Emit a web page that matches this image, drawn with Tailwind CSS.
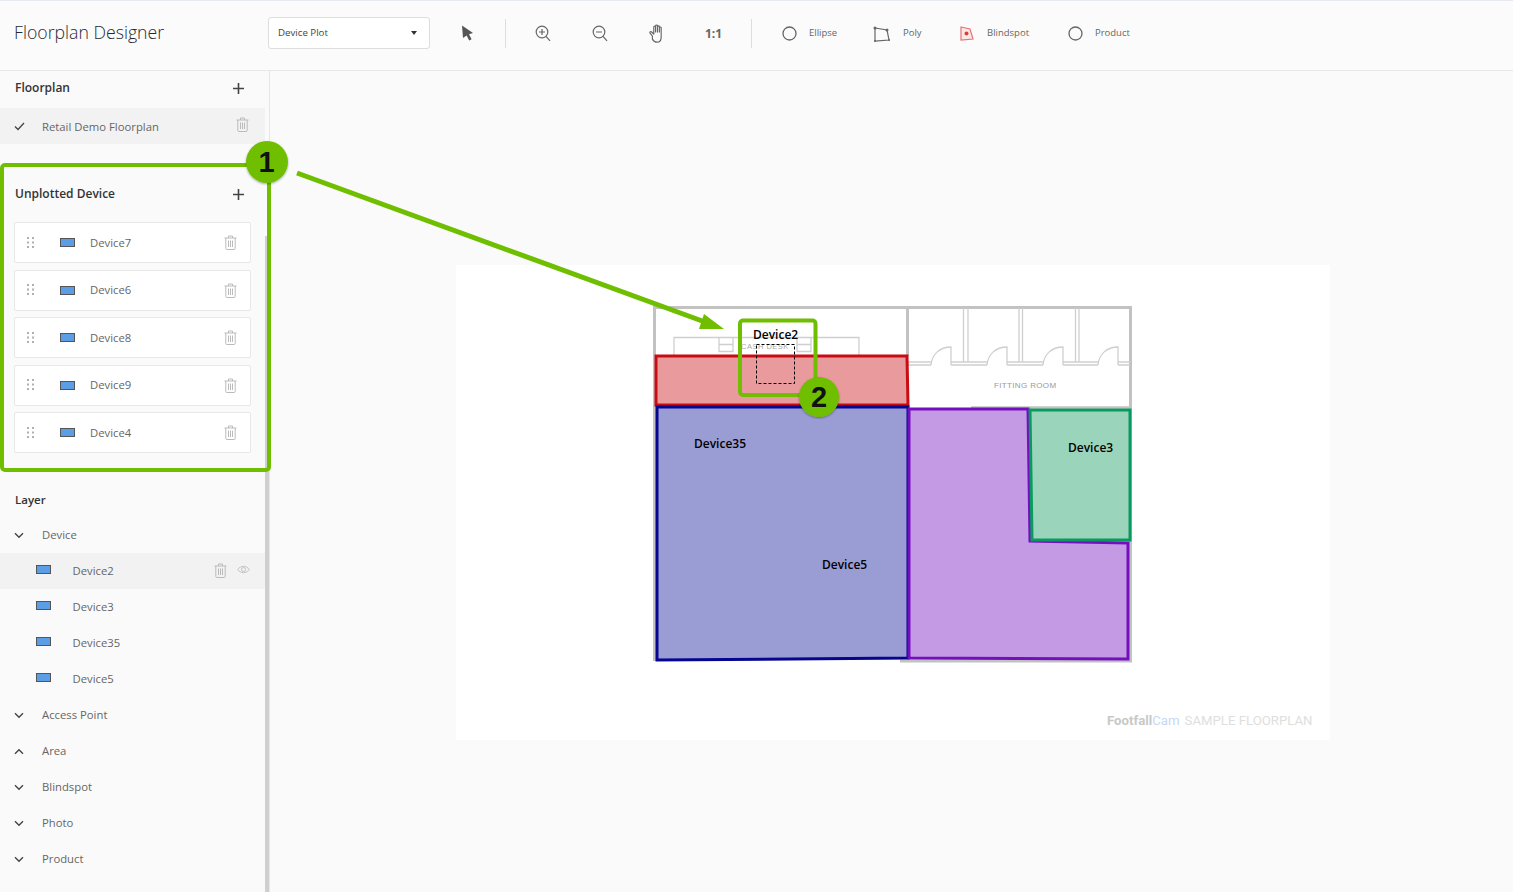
<!DOCTYPE html>
<html>
<head>
<meta charset="utf-8">
<script src="https://cdn.jsdelivr.net/npm/@tailwindcss/browser@4"></script>
</head>
<body class="m-0 overflow-hidden bg-[#fafafa] font-['Open_Sans',sans-serif] text-[#333]">
<svg width="0" height="0" class="absolute">
  <defs>
    <symbol id="trash" viewBox="0 0 13 15"><path d="M.5 3h12M4.500 3V1h4V3M1.800 3v10.500c0 .5.4 1 1 1h7.400c.6 0 1-.5 1-1V3M4.500 5.500v6.500M6.500 5.500v6.500M8.500 5.500v6.500" fill="none" stroke="currentColor" stroke-width="1"/></symbol>
    <symbol id="down" viewBox="0 0 10 7"><path d="M1 1.200l4 4 4-4" fill="none" stroke="#444" stroke-width="1.400"/></symbol>
    <symbol id="up" viewBox="0 0 10 7"><path d="M1 5.800l4-4 4 4" fill="none" stroke="#444" stroke-width="1.400"/></symbol>
    <symbol id="plus" viewBox="0 0 11 11"><path d="M5.500 0v11M0 5.500h11" stroke="#444" stroke-width="1.600"/></symbol>
    <symbol id="grip" viewBox="0 0 7 11"><g fill="#b0b0b0"><rect x="0" y="0" width="2" height="2"/><rect x="5" y="0" width="2" height="2"/><rect x="0" y="4.500" width="2" height="2"/><rect x="5" y="4.500" width="2" height="2"/><rect x="0" y="9" width="2" height="2"/><rect x="5" y="9" width="2" height="2"/></g></symbol>
  </defs>
</svg>

<div class="relative w-[1513px] h-[892px] overflow-hidden flex flex-col">
  <!-- Header -->
  <header class="h-[71px] shrink-0 flex items-center pb-[4px] border-t border-t-[#e6eaf0] border-b border-b-[#e8e8e8] bg-[#fbfbfb]">
    <h1 class="w-[268px] mb-[2px] pl-[14px] text-[17.700px] font-light text-[#1f2a35] whitespace-nowrap">Floorplan Designer</h1>
    <div class="w-[162px] h-[32px] mb-[2px] flex items-center justify-between pl-[9px] pr-[12px] bg-white border border-[#ddd] rounded-[3px] text-[9.700px] text-[#444]">
      <span class="pt-[1px]">Device Plot</span>
      <span class="w-0 h-0 border-x-[3.500px] border-x-transparent border-t-[4px] border-t-[#333]"></span>
    </div>
    <svg class="ml-[31px] mb-[1px] w-[13px] h-[16px]" viewBox="0 0 13 16"><path d="M1 .5l11 7.500-4 1.200 2.600 5-2.400 1.300-2.600-5L2 13z" fill="#555"/></svg>
    <span class="ml-[31px] w-px h-[29px] bg-[#ddd]"></span>
    <svg class="ml-[29px] w-[16px] h-[17px]" viewBox="0 0 16 17" fill="none" stroke="#666" stroke-width="1.200"><circle cx="7" cy="7" r="5.800"/><path d="M11 11.300l4 4.600M7 4v6M4 7h6"/></svg>
    <svg class="ml-[41px] w-[16px] h-[17px]" viewBox="0 0 16 17" fill="none" stroke="#666" stroke-width="1.200"><circle cx="7" cy="7" r="5.800"/><path d="M11 11.300l4 4.600M4 7h6"/></svg>
    <svg class="ml-[41px] w-[18px] h-[19px]" viewBox="0 0 17 18" fill="none" stroke="#666" stroke-width="1.100"><path d="M3.200 11.500L1 8.600c-.6-1 .7-1.800 1.500-1L4.500 9.600V2.800c0-1.200 1.700-1.200 1.700 0V1.800c0-1.100 1.800-1.100 1.800 0v.8c0-1.100 1.800-1.100 1.800 0v1c0-1.100 1.700-1 1.700 0v8.600c0 3-1.400 5-4 5-2.300 0-3.300-1.200-4.300-2.900zM6.200 2.800V8M8 2.600V8M9.800 3.600V8" stroke-linejoin="round"/></svg>
    <span class="ml-[38px] w-[18px] text-[12px] font-bold text-[#666]">1:1</span>
    <span class="ml-[28px] w-px h-[29px] bg-[#ddd]"></span>
    <svg class="ml-[30px] mb-[1px] w-[15px] h-[15px]" viewBox="0 0 15 15"><circle cx="7.500" cy="7.500" r="6.500" fill="none" stroke="#666" stroke-width="1.300"/></svg>
    <span class="ml-[12px] w-[29px] text-[9.500px] text-[#666]">Ellipse</span>
    <svg class="ml-[35px] w-[17px] h-[16px]" viewBox="0 0 17 16" fill="none" stroke="#666" stroke-width="1.200"><path d="M2 2l12 2 2 10-14 1z"/><g fill="#666" stroke="none"><circle cx="2" cy="2" r="1.500"/><circle cx="14" cy="4" r="1.500"/><circle cx="16" cy="14" r="1"/><circle cx="2" cy="15" r="1"/></g></svg>
    <span class="ml-[13px] w-[19px] text-[9.500px] text-[#666]">Poly</span>
    <svg class="ml-[38px] w-[14px] h-[15px]" viewBox="0 0 14 15"><path d="M1 1l9 2 3 10-12 1z" fill="#fde8e8" stroke="#e57373" stroke-width="1.200"/><circle cx="6.500" cy="7.500" r="2" fill="#e53935"/></svg>
    <span class="ml-[13px] w-[43px] text-[9.500px] text-[#666]">Blindspot</span>
    <svg class="ml-[38px] mb-[1px] w-[15px] h-[15px]" viewBox="0 0 15 15"><circle cx="7.500" cy="7.500" r="6.500" fill="none" stroke="#666" stroke-width="1.300"/></svg>
    <span class="ml-[12px] text-[9.500px] text-[#666]">Product</span>
  </header>

  <div class="flex flex-1 min-h-0">
    <!-- Sidebar -->
    <aside class="relative w-[270px] shrink-0 border-r border-[#e6e6e6] pr-[4px] text-[11.300px]">
      <div class="absolute right-0 top-[165px] bottom-0 w-[4px] bg-[#cfcfcf]"></div>
      <div class="h-[37px] flex items-center justify-between pb-[3px] pl-[15px] pr-[21px] font-semibold text-[12px] text-[#333]">
        <span>Floorplan</span>
        <svg class="w-[11px] h-[11px]"><use href="#plus"/></svg>
      </div>
      <div class="h-[36px] flex items-center bg-[#f2f2f2] pl-[14px] pr-[16px] text-[#666]">
        <svg class="w-[11px] h-[9px]" viewBox="0 0 11 9"><path d="M1 4.500l3 3 6-6.500" fill="none" stroke="#444" stroke-width="1.300"/></svg>
        <span class="ml-[17px] flex-1 pt-[2px]">Retail Demo Floorplan</span>
        <svg class="w-[13px] h-[15px] -mt-[4px] text-[#bbb]"><use href="#trash"/></svg>
      </div>

      <div class="mt-[32px] h-[36px] flex items-center justify-between pl-[15px] pr-[21px] font-semibold text-[12px] text-[#333]">
        <span>Unplotted Device</span>
        <svg class="w-[11px] h-[11px]"><use href="#plus"/></svg>
      </div>
      <ul class="mt-[10px] ml-[14px] w-[237px] flex flex-col gap-[6.500px] text-[#666]">
        <li class="h-[41px] flex items-center bg-white border border-[#e8e8e8] rounded-[2px] pl-[12px] pr-[13px]"><svg class="w-[7px] h-[11px] -mt-[1px]"><use href="#grip"/></svg><span class="ml-[26px] w-[15px] h-[9px] bg-[#5c9ee6] border border-[#555]"></span><span class="ml-[15px] flex-1 pt-[1px]">Device7</span><svg class="w-[13px] h-[15px] text-[#bbb]"><use href="#trash"/></svg></li>
        <li class="h-[41px] flex items-center bg-white border border-[#e8e8e8] rounded-[2px] pl-[12px] pr-[13px]"><svg class="w-[7px] h-[11px] -mt-[1px]"><use href="#grip"/></svg><span class="ml-[26px] w-[15px] h-[9px] bg-[#5c9ee6] border border-[#555]"></span><span class="ml-[15px] flex-1 pt-[1px]">Device6</span><svg class="w-[13px] h-[15px] text-[#bbb]"><use href="#trash"/></svg></li>
        <li class="h-[41px] flex items-center bg-white border border-[#e8e8e8] rounded-[2px] pl-[12px] pr-[13px]"><svg class="w-[7px] h-[11px] -mt-[1px]"><use href="#grip"/></svg><span class="ml-[26px] w-[15px] h-[9px] bg-[#5c9ee6] border border-[#555]"></span><span class="ml-[15px] flex-1 pt-[1px]">Device8</span><svg class="w-[13px] h-[15px] text-[#bbb]"><use href="#trash"/></svg></li>
        <li class="h-[41px] flex items-center bg-white border border-[#e8e8e8] rounded-[2px] pl-[12px] pr-[13px]"><svg class="w-[7px] h-[11px] -mt-[1px]"><use href="#grip"/></svg><span class="ml-[26px] w-[15px] h-[9px] bg-[#5c9ee6] border border-[#555]"></span><span class="ml-[15px] flex-1 pt-[1px]">Device9</span><svg class="w-[13px] h-[15px] text-[#bbb]"><use href="#trash"/></svg></li>
        <li class="h-[41px] flex items-center bg-white border border-[#e8e8e8] rounded-[2px] pl-[12px] pr-[13px]"><svg class="w-[7px] h-[11px] -mt-[1px]"><use href="#grip"/></svg><span class="ml-[26px] w-[15px] h-[9px] bg-[#5c9ee6] border border-[#555]"></span><span class="ml-[15px] flex-1 pt-[1px]">Device4</span><svg class="w-[13px] h-[15px] text-[#bbb]"><use href="#trash"/></svg></li>
      </ul>

      <div class="mt-[28px] h-[36px] flex items-center pt-[2px] pl-[15px] font-semibold text-[11.500px] text-[#333]">Layer</div>
      <div class="flex flex-col text-[#666]">
        <div class="h-[36px] flex items-center pl-[14px]"><svg class="w-[10px] h-[7px]"><use href="#down"/></svg><span class="ml-[18px]">Device</span></div>
        <div class="h-[36px] flex items-center bg-[#f2f2f2] pl-[36px] pr-[15px]"><span class="w-[15px] h-[9px] -mt-[3px] bg-[#5c9ee6] border border-[#555]"></span><span class="ml-[21.500px] flex-1 font-medium">Device2</span><svg class="w-[13px] h-[15px] -mt-[2px] text-[#bbb]"><use href="#trash"/></svg><svg class="ml-[10px] -mt-[4px] w-[13px] h-[9px]" viewBox="0 0 13 9" fill="none" stroke="#c4c4c4"><path d="M.7 4.500C3.500.3 9.500.3 12.300 4.500 9.500 8.700 3.500 8.700.7 4.500z"/><circle cx="6.500" cy="4.500" r="2"/></svg></div>
        <div class="h-[36px] flex items-center pl-[36px]"><span class="w-[15px] h-[9px] -mt-[3px] bg-[#5c9ee6] border border-[#555]"></span><span class="ml-[21.500px]">Device3</span></div>
        <div class="h-[36px] flex items-center pl-[36px]"><span class="w-[15px] h-[9px] -mt-[3px] bg-[#5c9ee6] border border-[#555]"></span><span class="ml-[21.500px]">Device35</span></div>
        <div class="h-[36px] flex items-center pl-[36px]"><span class="w-[15px] h-[9px] -mt-[3px] bg-[#5c9ee6] border border-[#555]"></span><span class="ml-[21.500px]">Device5</span></div>
        <div class="h-[36px] flex items-center pl-[14px]"><svg class="w-[10px] h-[7px]"><use href="#down"/></svg><span class="ml-[18px]">Access Point</span></div>
        <div class="h-[36px] flex items-center pl-[14px]"><svg class="w-[10px] h-[7px]"><use href="#up"/></svg><span class="ml-[18px]">Area</span></div>
        <div class="h-[36px] flex items-center pl-[14px]"><svg class="w-[10px] h-[7px]"><use href="#down"/></svg><span class="ml-[18px]">Blindspot</span></div>
        <div class="h-[36px] flex items-center pl-[14px]"><svg class="w-[10px] h-[7px]"><use href="#down"/></svg><span class="ml-[18px]">Photo</span></div>
        <div class="h-[36px] flex items-center pl-[14px]"><svg class="w-[10px] h-[7px]"><use href="#down"/></svg><span class="ml-[18px]">Product</span></div>
      </div>
    </aside>

    <!-- Canvas -->
    <main class="flex-1 bg-[#fafafa] pl-[186px] pt-[194px]">
      <div class="w-[874px] h-[475px] bg-white"></div>
    </main>
  </div>

  <!-- Floorplan drawing and callouts, in page coordinates -->
  <svg class="absolute left-0 top-0 pointer-events-none" width="1513" height="892" viewBox="0 0 1513 892">
    <defs>
      <filter id="sh" x="-20%" y="-20%" width="140%" height="140%"><feDropShadow dx="0" dy="1" stdDeviation="1" flood-color="#000" flood-opacity=".35"/></filter>
    </defs>
    <!-- walls -->
    <g fill="none" stroke="#c2c2c2">
      <path d="M654.500 661V307.500H1130.500V661H900" stroke-width="3"/>
      <path d="M907.500 307V356" stroke-width="3"/>
      <path d="M971 407.500H1131" stroke-width="2.500"/>
    </g>
    <g fill="none" stroke="#cfcfcf" stroke-width="1.300">
      <path d="M963.500 308V362M968 308V362M1019 308V362M1022.500 308V362M1075.500 308V362M1079 308V362"/>
      <path d="M908 362H931M951 362H987M1007 362H1043M1063 362H1098M1118 362H1130M908 365H931M951 365H987M1007 365H1043M1063 365H1098M1118 365H1130"/>
      <path d="M931 365C932 354 940 347 951 347V365M987 365C988 354 996 347 1007 347V365M1043 365C1044 354 1052 347 1063 347V365M1098 365C1099 354 1107 347 1118 347V365"/>
      <path d="M674 355V337.500H859V355M719 337.500V351.500H733V337.500M719 344.500H733M797 337.500V351.500H811V337.500M797 344.500H811"/>
    </g>
    <text x="741" y="349" font-size="7.500" fill="#aaa" font-family="Liberation Sans, sans-serif" letter-spacing=".5">CASH DESK</text>
    <text x="994" y="388" font-size="8" fill="#999" font-family="Liberation Sans, sans-serif" letter-spacing=".35">FITTING ROOM</text>
    <!-- zones -->
    <polygon points="656,356 907,356 908,405 656,405" fill="#e99a9c" stroke="#c80d12" stroke-width="3"/>
    <polygon points="657,407 908,407 908,658 657,660" fill="#9a9cd4" stroke="#05058f" stroke-width="3"/>
    <polygon points="909,409 1028,409 1030,541 1128,543 1128,659 909,658" fill="#c59ae4" stroke="#740fc0" stroke-width="3"/>
    <polygon points="1030,410 1130,410 1130,540 1032,540" fill="#9ad4bb" stroke="#0a9a5f" stroke-width="3"/>
    <rect x="756.500" y="344.500" width="38" height="39" fill="none" stroke="#000" stroke-dasharray="3 2"/>
    <g font-family="Open Sans, sans-serif" font-size="12" font-weight="600" fill="#000">
      <text x="753" y="339">Device2</text>
      <text x="694" y="448">Device35</text>
      <text x="822" y="569">Device5</text>
      <text x="1068" y="452">Device3</text>
    </g>
    <text x="1107" y="725" font-family="Roboto, sans-serif" font-size="13.200"><tspan font-weight="700" fill="#c8c8c8">Footfall</tspan><tspan fill="#c5d8f5">Cam</tspan><tspan dx="5" fill="#dedede">SAMPLE FLOORPLAN</tspan></text>
    <!-- callouts -->
    <rect x="2" y="165" width="267" height="305" rx="3" fill="none" stroke="#6fbe00" stroke-width="4"/>
    <rect x="740" y="320.500" width="75.500" height="74.500" rx="3" fill="none" stroke="#6fbe00" stroke-width="4"/>
    <path d="M297 173L705 322" stroke="#6fbe00" stroke-width="5" fill="none"/>
    <polygon points="724,329 704,314 699,329" fill="#6fbe00"/>
    <g filter="url(#sh)"><circle cx="267" cy="162" r="21" fill="#6fbe00"/></g>
    <g filter="url(#sh)"><circle cx="819" cy="397" r="20" fill="#6fbe00"/></g>
    <g font-family="Liberation Sans, sans-serif" font-weight="700" font-size="29" fill="#111" text-anchor="middle">
      <text x="266.500" y="172">1</text>
      <text x="819" y="407">2</text>
    </g>
  </svg>
</div>
</body>
</html>
